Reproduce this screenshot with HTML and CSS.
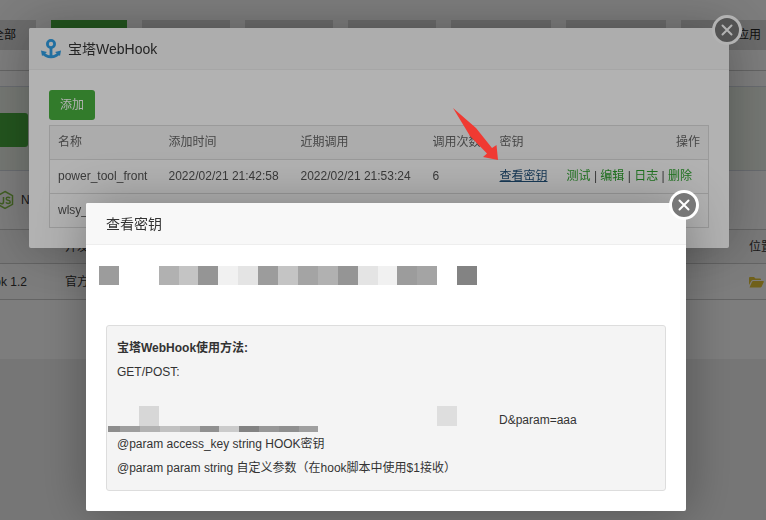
FILE: index.html
```html
<!DOCTYPE html>
<html lang="zh-CN">
<head>
<meta charset="utf-8">
<title>宝塔WebHook</title>
<link rel="stylesheet" href="styles.css">
</head>
<body>
<main class="page">
  <nav class="tabs">
    <a class="tab" href="#">全部</a>
    <a class="tab tab-active" href="#">已安装</a>
    <a class="tab" href="#">运行环境</a>
    <a class="tab" href="#">系统工具</a>
    <a class="tab" href="#">宝塔插件</a>
    <a class="tab" href="#">专业版插件</a>
    <a class="tab" href="#">企业版插件</a>
    <a class="tab" href="#">第三方应用</a>
  </nav>
  <section class="promo"><button class="buy" type="button"></button></section>
  <div class="recent">
    <svg class="node-icon" viewBox="0 0 18 20" aria-hidden="true">
      <path d="M9 1.500 16.500 5.700V14.300L9 18.500 1.500 14.300V5.700Z" fill="none" stroke="#83c046" stroke-width="1.500"/>
      <path d="M7.500 7V12q0 1.800-1.900 1.800-1.300 0-1.600-1M14 8.200q-.6-.9-2-.9-1.800 0-1.800 1.400 0 1.300 1.900 1.500 2.100.2 2.100 1.700t-2.100 1.500q-1.600 0-2.200-1.100" fill="none" stroke="#83c046" stroke-width="1.500"/>
    </svg>
    <span>Node.js</span>
  </div>
  <div class="list-row list-head"><span></span><span>开发商</span><span>位置</span></div>
  <div class="list-row list-item"><span>宝塔WebHook 1.2</span><span>官方</span>
    <svg class="folder" viewBox="0 0 15 12" aria-hidden="true"><path d="M0 9V2q0-1 1-1h4l1.500 1.500H11q1 0 1 1V4H4Q2.800 4 2.300 5Z M.5 11.500 3 5.800Q3.400 5 4.300 5H14.200q1 0 .6.900L12.600 10.700q-.4.8-1.300.8Z" fill="#e5c536"/></svg>
  </div>
</main>

<div class="shade"></div>

<section class="dialog dialog-hook">
  <header class="dialog-title">
    <svg class="anchor" viewBox="0 0 20 20" fill="none" stroke="#309fe6" aria-hidden="true">
      <circle cx="10" cy="5" r="3.600" stroke-width="2.800"/>
      <path d="M10 9V18M2.200 14Q4.500 17.800 10 17.800T17.800 14" stroke-width="2.800"/>
      <path d="M0 11.500 6 13 1 17ZM20 11.500 14 13 19 17Z" fill="#309fe6" stroke="none"/>
    </svg>
    <span>宝塔WebHook</span>
  </header>
  <div class="dialog-body">
    <button class="add" type="button">添加</button>
    <table class="hooks">
      <colgroup><col class="c-name"><col class="c-time"><col class="c-time"><col class="c-count"><col class="c-key"><col></colgroup>
      <thead>
        <tr><th>名称</th><th>添加时间</th><th>近期调用</th><th>调用次数</th><th>密钥</th><th class="ops">操作</th></tr>
      </thead>
      <tbody>
        <tr><td>power_tool_front</td><td>2022/02/21 21:42:58</td><td>2022/02/21 21:53:24</td><td>6</td><td><a class="key-link" href="#">查看密钥</a></td>
          <td class="ops ops-links"><a href="#">测试</a> | <a href="#">编辑</a> | <a href="#">日志</a> | <a href="#">删除</a></td></tr>
        <tr><td>wlsy_</td><td></td><td></td><td></td><td></td><td></td></tr>
      </tbody>
    </table>
  </div>
  <button class="close" type="button" aria-label="关闭">
    <svg viewBox="0 0 12 12" aria-hidden="true"><path d="M1.500 1.500 10.500 10.500M10.500 1.500 1.500 10.500" fill="none" stroke="#fff" stroke-width="2" stroke-linecap="round"/></svg>
  </button>
</section>

<div class="shade"></div>

<section class="dialog dialog-key">
  <header class="dialog-title title-plain">查看密钥</header>
  <div class="dialog-body">
    <div class="key-value">
      <svg class="key-mask" viewBox="0 0 19 1" preserveAspectRatio="none" shape-rendering="crispEdges" aria-hidden="true">
        <path fill="#9c9c9c" d="M0 0h1v1H0zM8 0h1v1H8zM15 0h1v1h-1z"/>
        <path fill="#b1b1b1" d="M3 0h1v1H3zM11 0h1v1h-1z"/>
        <path fill="#c4c4c4" d="M4 0h1v1H4zM9 0h1v1H9z"/>
        <path fill="#959595" d="M5 0h1v1H5zM12 0h1v1h-1z"/>
        <path fill="#f1f1f1" d="M6 0h1v1H6zM14 0h1v1h-1z"/>
        <path fill="#e4e4e4" d="M7 0h1v1H7zM13 0h1v1h-1z"/>
        <path fill="#a4a4a4" d="M10 0h1v1h-1zM16 0h1v1h-1z"/>
        <path fill="#838383" d="M18 0h1v1h-1z"/>
      </svg>
    </div>
    <div class="help">
      <p><b>宝塔WebHook使用方法:</b></p>
      <p>GET/POST:</p>
      <p class="url">D&amp;param=aaa</p>
      <p>@param access_key string HOOK密钥</p>
      <p>@param param string 自定义参数（在hook脚本中使用$1接收）</p>
      <svg class="url-mask" viewBox="0 0 349 27" shape-rendering="crispEdges" aria-hidden="true">
        <path fill="#d7d7d7" d="M31 0h20v20H31z"/>
        <path fill="#dedede" d="M329 0h20v20h-20z"/>
        <path fill="#8d8d8d" d="M0 20h12v6H0z"/>
        <path fill="#9e9e9e" d="M12 20h20v6H12z"/>
        <path fill="#b2b2b2" d="M32 20h20v6H32z"/>
        <path fill="#c1c1c1" d="M52 20h20v6H52z"/>
        <path fill="#b6b6b6" d="M72 20h20v6H72z"/>
        <path fill="#909090" d="M92 20h19v6H92z"/>
        <path fill="#cbcbcb" d="M111 20h20v6h-20z"/>
        <path fill="#828282" d="M131 20h20v6h-20z"/>
        <path fill="#979797" d="M151 20h20v6h-20z"/>
        <path fill="#8f8f8f" d="M171 20h20v6h-20z"/>
        <path fill="#9f9f9f" d="M191 20h19v6h-19z"/>
      </svg>
    </div>
  </div>
  <button class="close" type="button" aria-label="关闭">
    <svg viewBox="0 0 12 12" aria-hidden="true"><path d="M1.500 1.500 10.500 10.500M10.500 1.500 1.500 10.500" fill="none" stroke="#fff" stroke-width="2" stroke-linecap="round"/></svg>
  </button>
</section>

<svg class="arrow" viewBox="0 0 46 54" aria-hidden="true"><path d="M0 0 23 20 39 40 43.500 37 45 52 30 49 34 45.500 17 28Z" fill="#f03a32"/></svg>
</body>
</html>
```
FILE: styles.css
```css
* { box-sizing: border-box; }
body {
  margin: 0;
  min-height: 100vh;
  overflow: hidden;
  background: #f0f0f0;
  color: #333;
  font: 12px/20px "Liberation Sans", "Noto Sans CJK SC", sans-serif;
}
button { border: 0; padding: 0; font: inherit; }
p { margin: 0; }
a { text-decoration: none; }

.page { margin-left: -28px; height: 359px; padding-top: 20px; background: #fff; }
.tabs { display: flex; gap: 15px; padding-bottom: 20px; border-bottom: 1px solid #ccc; white-space: nowrap; }
.tab { flex: none; padding: 5px 20px; background: #dcdcdc; color: #222; }
.tab-active { background: #48ad3e; color: #fff; }
.promo { margin-top: 15px; height: 85px; padding-top: 26px; border: solid #d5dbe4; border-width: 1px 0; background: #eff5ec; }
.buy { display: block; width: 56px; height: 34px; border-radius: 3px; background: #48ad3e; }
.recent { display: flex; align-items: center; gap: 7px; height: 58px; padding-left: 24px; }
.node-icon { width: 18px; height: 20px; }
.list-row { display: grid; grid-template-columns: 93px 1fr 17px; align-items: center; height: 34px; border-top: 1px solid #ccc; white-space: nowrap; }
.list-row > span:first-child { justify-self: end; margin-right: 38px; }
.list-head { background: #f7f7f7; }
.list-item { height: 37px; border-bottom: 1px solid #ccc; }
.folder { width: 15px; height: 12px; }

.shade { position: fixed; inset: 0; background: rgba(0, 0, 0, .3); }
.dialog { position: fixed; border-radius: 2px; background: #fff; box-shadow: 1px 1px 50px rgba(0, 0, 0, .3); }
.dialog-hook { top: 28px; left: calc(50% - 354px); width: 700px; }
.dialog-key { top: 203px; left: calc(50% - 297px); width: 600px; }
.dialog-title { display: flex; align-items: center; gap: 7px; height: 42px; padding-left: 12px; border-bottom: 1px solid #eee; border-radius: 2px 2px 0 0; background: #f8f8f8; font-size: 14px; }
.title-plain { padding-left: 20px; }
.anchor { width: 20px; height: 20px; }
.dialog-body { padding: 20px; }
.add { display: block; width: 46px; height: 30px; border-radius: 3px; background: #48b03e; color: #fff; }
.hooks { width: 100%; margin-top: 5px; border: 1px solid #ddd; border-collapse: collapse; table-layout: fixed; white-space: nowrap; color: #555; }
.hooks th, .hooks td { height: 34px; padding: 0 8px 2px; border-top: 1px solid #ddd; text-align: left; font-weight: 400; }
.hooks th { background: #f6f6f6; color: #666; }
.hooks .ops { text-align: right; }
.hooks .ops-links { padding-right: 16px; }
.c-name { width: 111px; }
.c-time { width: 132px; }
.c-count { width: 67px; }
.c-key { width: 63px; }
.ops a { color: #2fa52f; }
.key-link { color: #23527c; text-decoration: underline; }
.close { position: absolute; top: -13px; right: -13px; display: flex; align-items: center; justify-content: center; width: 30px; height: 30px; border: 3px solid #fff; border-radius: 50%; background: #787878; }
.close svg { width: 12px; height: 12px; }

.key-value { height: 60px; padding-top: 1px; }
.key-mask { display: block; width: 378px; height: 19px; margin-left: -7px; }
.help { position: relative; padding: 10px; border: 1px solid #ddd; border-radius: 3px; background: #f4f4f4; line-height: 24px; }
.url { padding: 24px 0 0 382px; }
.url-mask { position: absolute; top: 80px; left: 1px; width: 349px; height: 27px; }
.arrow { position: fixed; top: 108px; left: calc(50% + 70px); width: 46px; height: 54px; }
```
